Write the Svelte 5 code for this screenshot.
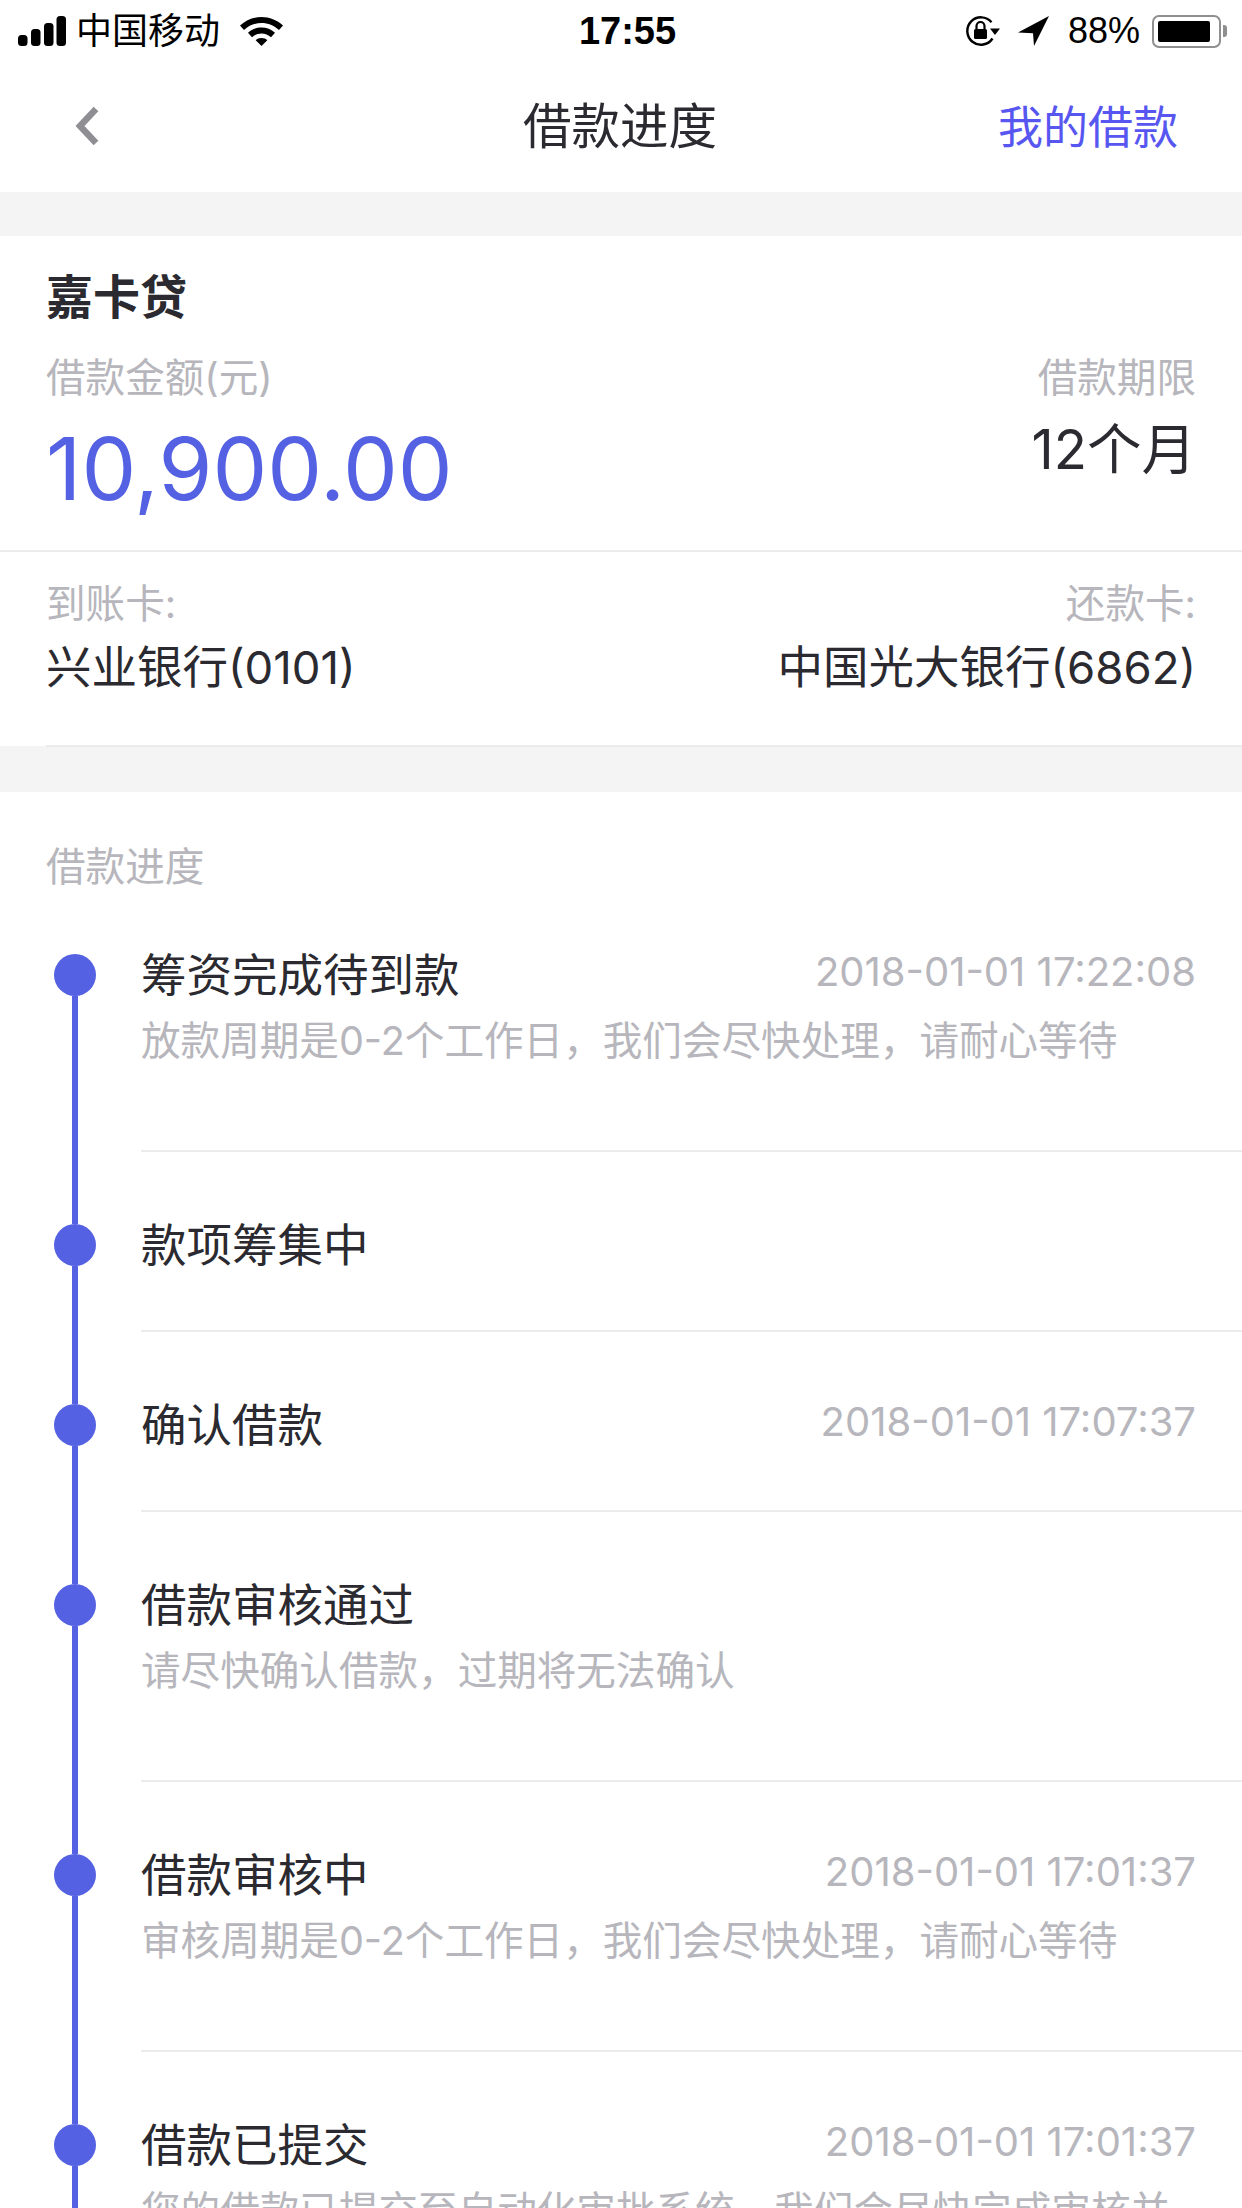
<script lang="ts">
  const steps = [
    { title: '筹资完成待到款', time: '2018-01-01 17:22:08', note: '放款周期是0-2个工作日，我们会尽快处理，请耐心等待' },
    { title: '款项筹集中', time: '', note: '' },
    { title: '确认借款', time: '2018-01-01 17:07:37', note: '' },
    { title: '借款审核通过', time: '', note: '请尽快确认借款，过期将无法确认' },
    { title: '借款审核中', time: '2018-01-01 17:01:37', note: '审核周期是0-2个工作日，我们会尽快处理，请耐心等待' },
    { title: '借款已提交', time: '2018-01-01 17:01:37', note: '您的借款已提交至自动化审批系统，我们会尽快完成审核并通知您' }
  ];
</script>

<div class="page">
  <header class="status">
    <div class="status-left">
      <svg class="signal" width="48" height="30" viewBox="0 0 48 30" fill="#000">
        <rect x="0" y="19" width="9.5" height="11" rx="3.5"/>
        <rect x="13" y="13" width="9.5" height="17" rx="3.5"/>
        <rect x="26" y="7" width="9.5" height="23" rx="3.5"/>
        <rect x="38.5" y="0" width="9.5" height="30" rx="3.5"/>
      </svg>
      <span class="carrier">中国移动</span>
      <svg class="wifi" width="43" height="29" viewBox="0 0 43 29" fill="#000">
        <path d="M21.5 0C13.5 0 6 3 0 8.5l4 4.5C9 8.500 15 6 21.500 6S34 8.500 39 13l4-4.500C37 3 29.500 0 21.500 0z"/>
        <path d="M21.500 10.500c-5 0-9.800 1.800-13.500 5.200l4 4.500c2.600-2.300 6-3.700 9.500-3.700s6.900 1.400 9.500 3.700l4-4.500c-3.700-3.400-8.500-5.200-13.500-5.200z"/>
        <path d="M21.500 21c-2.400 0-4.400.8-5.800 2.200l5.800 5.800 5.800-5.800c-1.400-1.400-3.400-2.200-5.800-2.200z"/>
      </svg>
    </div>
    <span class="clock">17:55</span>
    <div class="status-right">
      <svg class="lock" width="34" height="30" viewBox="0 0 34 30" fill="none">
        <path d="M26.500 22.500A13.700 13.700 0 1 1 25.500 6.200" stroke="#000" stroke-width="2.400"/>
        <path d="M24 12.500h10l-5 6.500z" fill="#000"/>
        <rect x="8" y="13" width="13" height="10" rx="1.500" fill="#000"/>
        <path d="M10.500 13v-3a4 4 0 0 1 8 0v3" stroke="#000" stroke-width="2.200"/>
      </svg>
      <svg class="arrow" width="31" height="30" viewBox="0 0 31 30" fill="#000">
        <path d="M31 0L0 16.500l15 .8L16 30z"/>
      </svg>
      <span class="battery-pct">88%</span>
      <div class="battery">
        <div class="battery-body"><div class="battery-fill"></div></div>
        <div class="battery-nub"></div>
      </div>
    </div>
  </header>

  <nav class="nav">
    <svg class="back" width="24" height="40" viewBox="0 0 24 40" fill="none">
      <path d="M21 3L5 20l16 17" stroke="#8e8e93" stroke-width="6.500"/>
    </svg>
    <h1 class="nav-title">借款进度</h1>
    <span class="nav-link">我的借款</span>
  </nav>

  <section class="card">
    <div class="product">嘉卡贷</div>
    <div class="amount-row">
      <div>
        <div class="label">借款金额(元)</div>
        <div class="amount">10,900.00</div>
      </div>
      <div class="term">
        <div class="label">借款期限</div>
        <div class="term-value">12个月</div>
      </div>
    </div>
    <div class="cards-row">
      <div>
        <div class="label">到账卡:</div>
        <div class="bank">兴业银行(0101)</div>
      </div>
      <div class="right">
        <div class="label">还款卡:</div>
        <div class="bank">中国光大银行(6862)</div>
      </div>
    </div>
  </section>

  <section class="progress">
    <div class="label progress-label">借款进度</div>
    {#each steps as step, i}
      <div class="step">
        <div class="rail">
          <div class="seg seg-top" class:hidden={i === 0}></div>
          <div class="dot"></div>
          <div class="seg seg-bottom"></div>
        </div>
        <div class="step-body" class:tall={step.note}>
          <div class="step-head">
            <span class="step-title">{step.title}</span>
            {#if step.time}
              <span class="step-time">{step.time}</span>
            {/if}
          </div>
          {#if step.note}
            <div class="step-note">{step.note}</div>
          {/if}
        </div>
      </div>
    {/each}
  </section>
</div>

<style>
  :global(body) {
    margin: 0;
    background: #fff;
  }

  .page {
    width: 1242px;
    height: 2208px;
    overflow: hidden;
    background: #f4f4f4;
    color: #2a2a30;
    font-family: Inter, "Noto Sans CJK SC", sans-serif;
  }

  .status {
    height: 62px;
    background: #fff;
    display: grid;
    grid-template-columns: 1fr auto 1fr;
    align-items: center;
    padding: 0 15px 0 18px;
    color: #000;
  }

  .status-left,
  .status-right {
    display: flex;
    align-items: center;
  }

  .status-right {
    justify-content: flex-end;
  }

  .carrier {
    font-size: 36px;
    line-height: 44px;
    margin-left: 10px;
  }

  .wifi {
    margin-left: 20px;
  }

  .clock {
    font-size: 38px;
    margin-left: 10px;
    font-family: "Liberation Sans", sans-serif;
    font-weight: 700;
  }

  .arrow {
    margin-left: 18px;
  }

  .battery-pct {
    font-size: 36px;
    margin-left: 19px;
    font-family: "Liberation Sans", sans-serif;
  }

  .battery {
    display: flex;
    align-items: center;
    margin-left: 12px;
  }

  .battery-body {
    width: 69px;
    height: 33px;
    box-sizing: border-box;
    border: 2px solid #8f8f8f;
    border-radius: 7px;
    padding: 4px 9px 4px 4px;
  }

  .battery-fill {
    height: 100%;
    background: #000;
    border-radius: 2px;
  }

  .battery-nub {
    width: 4px;
    height: 12px;
    margin-left: 2px;
    background: #8f8f8f;
    border-radius: 0 3px 3px 0;
  }

  .nav {
    height: 130px;
    background: #fff;
    display: grid;
    grid-template-columns: 1fr auto 1fr;
    align-items: center;
    padding: 0 64px 0 75px;
  }

  .nav-title {
    margin: 0 0 8px -13px;
    font-size: 48.500px;
    font-weight: 400;
  }

  .nav-link {
    justify-self: end;
    font-size: 45px;
    margin-bottom: 6px;
    color: #5856f0;
  }

  .back {
    margin-bottom: 2px;
  }

  .card {
    margin-top: 44px;
    background: #fff;
    padding: 31px 46px 0 46px;
    height: 510px;
    box-sizing: border-box;
  }

  .product {
    font-size: 47px;
    line-height: 60px;
    font-weight: 700;
  }

  .label {
    font-size: 39.600px;
    line-height: 50px;
    color: #b6b6bc;
  }

  .amount-row {
    display: flex;
    justify-content: space-between;
    margin: 26px -46px 0;
    padding: 0 46px;
    height: 197px;
    border-bottom: 2px solid #ebebeb;
  }

  .amount {
    font-size: 87px;
    line-height: 110px;
    margin-top: 11px;
    color: #5461e3;
  }

  .term {
    text-align: right;
  }

  .term-value {
    font-size: 54.500px;
    line-height: 70px;
    margin-top: 11px;
  }

  .cards-row {
    display: flex;
    justify-content: space-between;
    padding-top: 27px;
    height: 195px;
    margin-right: -46px;
    padding-right: 46px;
    box-sizing: border-box;
    border-bottom: 2px solid #ebebeb;
  }

  .right {
    text-align: right;
  }

  .bank {
    font-size: 45.500px;
    line-height: 60px;
    margin-top: 9px;
  }

  .progress {
    margin-top: 46px;
    background: #fff;
    min-height: 1420px;
  }

  .progress-label {
    height: 40px;
    padding: 50px 0 0 46px;
  }

  .step {
    display: flex;
  }

  .rail {
    width: 141px;
    flex: none;
    padding-left: 54px;
    box-sizing: border-box;
    display: flex;
    flex-direction: column;
  }

  .seg {
    width: 6px;
    margin-left: 18px;
    background: #5461e3;
  }

  .seg-top {
    height: 72px;
  }

  .seg-bottom {
    flex: 1;
  }

  .hidden {
    visibility: hidden;
  }

  .dot {
    width: 42px;
    height: 42px;
    border-radius: 50%;
    background: #5461e3;
  }

  .step-body {
    flex: 1;
    height: 180px;
    box-sizing: border-box;
    border-bottom: 2px solid #ebebeb;
    padding: 60px 46px 0 0;
  }

  .step-body.tall {
    height: 270px;
  }

  .step-head {
    display: flex;
    justify-content: space-between;
    align-items: center;
    height: 60px;
  }

  .step-title {
    font-size: 45.500px;
  }

  .step-time {
    font-size: 40px;
    color: #b6b6bc;
    margin-top: -2px;
  }

  .step-note {
    font-size: 39.600px;
    line-height: 60px;
    margin-top: 9px;
    color: #b6b6bc;
  }
</style>
